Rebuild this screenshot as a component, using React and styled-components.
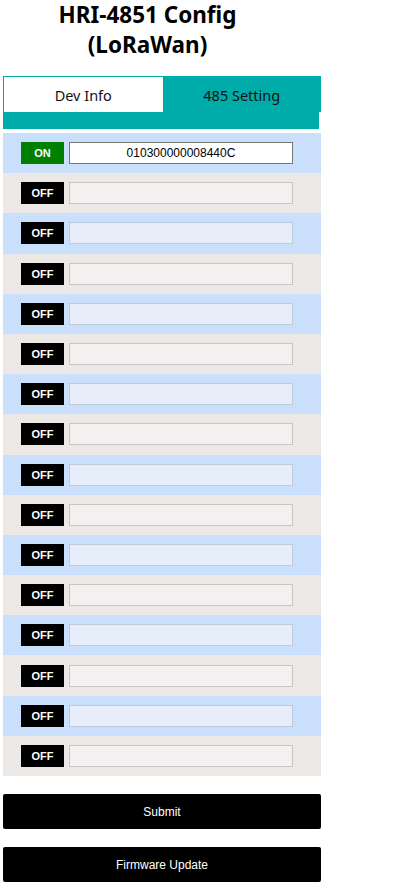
import { useState } from 'react';
import styled, { createGlobalStyle } from 'styled-components';

const Global = createGlobalStyle`
  body {
    margin: 0;
    background: #fff;
    font-family: "Liberation Sans", Arial, sans-serif;
  }
`

const Page = styled.div`
  padding: 0 3px;
  width: 318px;
`

const Title = styled.h1`
  margin: 0;
  width: 289px;
  text-align: center;
  font-family: "Noto Sans", "Open Sans", sans-serif;
  font-size: 22.5px;
  line-height: 30px;
  font-weight: 700;
  color: #000;
`

const TabBar = styled.div`
  margin-top: 16px;
  background: #00aca9;
  display: flex;
  padding: 1px 0 0 1px;
`

const Tab = styled.button`
  flex: 1;
  height: 35px;
  border: none;
  margin: 0;
  padding: 0;
  font-family: "Noto Sans", "Open Sans", sans-serif;
  font-size: 14.5px;
  color: #111;
  background: ${p => (p.$active ? '#fff' : '#00aca9')};
  cursor: pointer;
`

const TabFoot = styled.div`
  width: 316px;
  height: 17px;
  background: #00aca9;
`

const List = styled.div`
  margin-top: 4px;
`

const Row = styled.div`
  height: 40.2px;
  display: flex;
  align-items: center;
  gap: 5px;
  padding-left: 18px;
  background: ${p => (p.$odd ? '#ece8e6' : '#c9dffc')};
`

const Toggle = styled.button`
  width: 43px;
  height: 22px;
  border: none;
  padding: 0;
  font-family: "Liberation Sans", Arial, sans-serif;
  font-size: 11px;
  font-weight: 700;
  color: #fff;
  background: ${p => (p.$on ? '#008000' : '#000')};
`

const Field = styled.input`
  box-sizing: border-box;
  width: 224px;
  height: 22px;
  text-align: center;
  font-family: "Liberation Sans", Arial, sans-serif;
  font-size: 12px;
  color: #000;
  border: 1px solid #767676;
  background: #fff;
  outline: none;

  &:disabled {
    background: ${p => (p.$odd ? '#f2f0f0' : '#e7eef9')};
    border-color: ${p => (p.$odd ? '#c8c6c5' : '#bccadd')};
  }
`

const Action = styled.button`
  display: block;
  width: 318px;
  height: 35px;
  margin-top: 18px;
  border: none;
  border-radius: 2px;
  background: #000;
  color: #fff;
  font-family: "Liberation Sans", Arial, sans-serif;
  font-size: 12px;
  font-weight: 400;
`

const initial = Array.from({ length: 16 }, (_, i) =>
  i === 0 ? { on: true, value: '010300000008440C' } : { on: false, value: '' }
)

export default function App() {
  const [tab, setTab] = useState(0)
  const [rows, setRows] = useState(initial)

  const flip = i =>
    setRows(rs => rs.map((r, j) => (j === i ? { ...r, on: !r.on } : r)))

  return (
    <Page>
      <Global />
      <Title>
        HRI-4851 Config
        <br />
        (LoRaWan)
      </Title>
      <TabBar>
        <Tab $active={tab === 0} onClick={() => setTab(0)}>Dev Info</Tab>
        <Tab $active={tab === 1} onClick={() => setTab(1)}>485 Setting</Tab>
      </TabBar>
      <TabFoot />
      <List>
        {rows.map((r, i) => (
          <Row key={i} $odd={i % 2 === 1}>
            <Toggle $on={r.on} onClick={() => flip(i)}>{r.on ? 'ON' : 'OFF'}</Toggle>
            <Field
              $odd={i % 2 === 1}
              value={r.value}
              disabled={!r.on}
              onChange={e =>
                setRows(rs => rs.map((x, j) => (j === i ? { ...x, value: e.target.value } : x)))
              }
            />
          </Row>
        ))}
      </List>
      <Action>Submit</Action>
      <Action>Firmware Update</Action>
    </Page>
  );
};
